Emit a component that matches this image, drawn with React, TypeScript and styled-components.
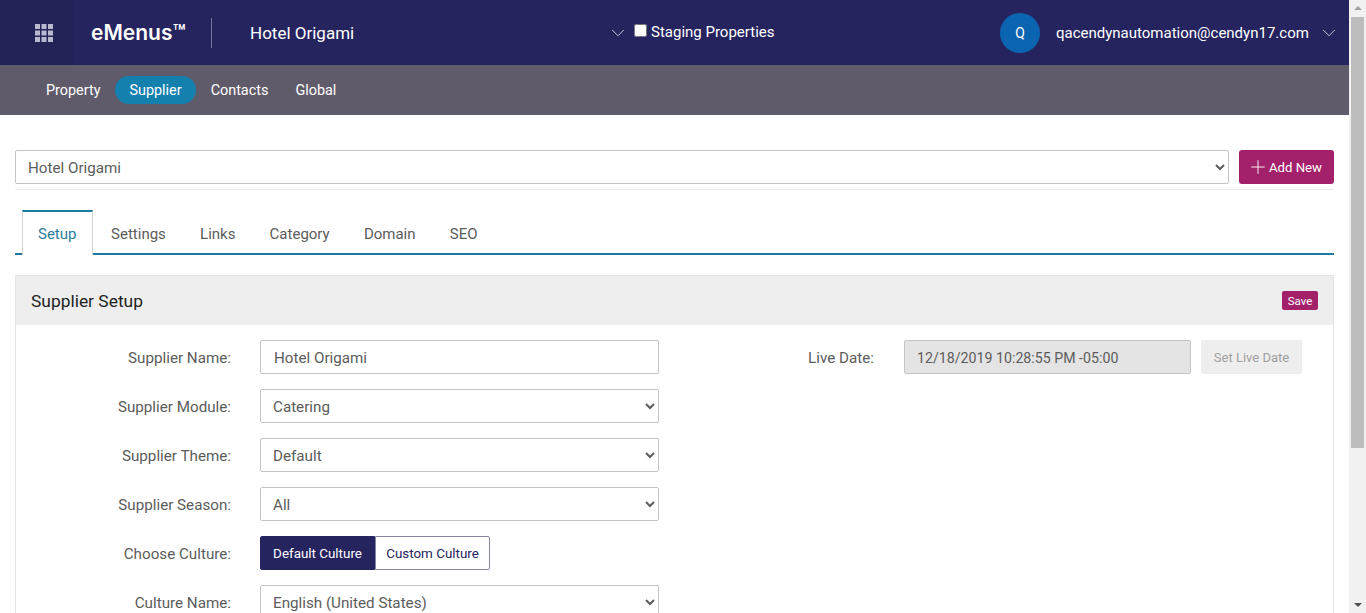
import styled, { createGlobalStyle } from 'styled-components';
import { ChevronDown, Plus } from 'lucide-react';

const GlobalStyle = createGlobalStyle`
  body {
    margin: 0;
    background: #fff;
    font-family: Roboto, "Noto Sans", sans-serif;
    color: #5c5c5c;
  }
`;

const Page = styled.div`
  height: 613px;
  padding-right: 17px;
  overflow: hidden;
`;

const ScrollTrack = styled.div`
  position: fixed;
  top: 0;
  right: 0;
  bottom: 0;
  display: flex;
  flex-direction: column;
  align-items: center;
  justify-content: space-between;
  width: 17px;
  background: #f1f1f1;
`;

const ScrollArrow = styled.div<{ $down?: boolean }>`
  width: 0;
  height: 0;
  margin: 6px 0;
  border-left: 4px solid transparent;
  border-right: 4px solid transparent;
  ${({ $down }) => ($down ? 'border-top: 4px solid #505050;' : 'border-bottom: 4px solid #a3a3a3;')}
`;

const ScrollThumb = styled.div`
  position: absolute;
  top: 17px;
  left: 2px;
  width: 13px;
  height: 431px;
  background: #bdbdbd;
`;

const TopBar = styled.header`
  display: flex;
  align-items: center;
  height: 65px;
  background: #25245f;
  color: #fff;
`;

const AppsButton = styled.div`
  display: flex;
  align-items: center;
  justify-content: center;
  box-sizing: border-box;
  width: 73px;
  height: 65px;
  margin-right: 18px;
  padding-left: 15px;
  background: #232358;
`;

const Brand = styled.div`
  width: 120px;
  height: 30px;
  line-height: 30px;
  font-family: Inter, sans-serif;
  font-size: 21px;
  font-weight: 600;
  border-right: 1px solid #77769b;
`;

const HotelName = styled.div`
  width: 357px;
  margin-left: 38px;
  font-size: 17px;
`;

const StagingLabel = styled.label`
  display: flex;
  align-items: center;
  width: 371px;
  margin-top: -2px;
  font-size: 15px;
`;

const StagingBox = styled.input`
  width: 13px;
  height: 13px;
  margin: 0 4px 2px 5px;
`;

const Avatar = styled.div`
  display: flex;
  align-items: center;
  justify-content: center;
  width: 40px;
  height: 40px;
  margin-right: 16px;
  border-radius: 50%;
  background: #0b64b0;
  font-size: 14px;
`;

const UserEmail = styled.div`
  margin-right: 9px;
  font-size: 15px;
`;

const SubBar = styled.nav`
  display: flex;
  align-items: center;
  gap: 3px;
  height: 50px;
  padding-left: 34px;
  background: #5f5b6b;
`;

const SubLink = styled.div<{ $active?: boolean }>`
  height: 28px;
  padding: 0 ${({ $active }) => ($active ? '14px' : '12px')};
  line-height: 29px;
  border-radius: 14px;
  font-size: 14.4px;
  color: #fff;
  background: ${({ $active }) => ($active ? '#1380ad' : 'transparent')};
`;

const Content = styled.main`
  padding: 35px 15px 0;
`;

const SelectRow = styled.div`
  display: flex;
  gap: 10px;
  padding-bottom: 5px;
  border-bottom: 1px solid #eee;
`;

const Select = styled.select`
  box-sizing: border-box;
  height: 34px;
  padding: 1px 8px 0;
  font: inherit;
  font-size: 15.2px;
  color: #5c5c5c;
  background: #fff;
  border: 1px solid #c4c4c4;
  border-radius: 2px;
`;

const SupplierSelect = styled(Select)`
  flex: 1;
`;

const AddNew = styled.button`
  display: flex;
  align-items: center;
  justify-content: center;
  width: 95px;
  height: 34px;
  padding: 0;
  font: inherit;
  font-size: 13.2px;
  color: #fff;
  background: #a3206b;
  border: 0;
  border-radius: 3px;
`;

const AddIcon = styled(Plus)`
  margin: 0 0 0 -4px;
`;

const Tabs = styled.div`
  display: flex;
  box-sizing: border-box;
  height: 45px;
  margin-top: 20px;
  padding-left: 7px;
  border-bottom: 2px solid #1d7b9f;
`;

const Tab = styled.div<{ $active?: boolean }>`
  box-sizing: border-box;
  height: ${({ $active }) => ($active ? '45px' : '43px')};
  padding: 0 ${({ $active }) => ($active ? '15px 0 15px' : '17.1px')};
  line-height: ${({ $active }) => ($active ? '44px' : '48px')};
  font-size: 15px;
  color: ${({ $active }) => ($active ? '#2a7ea0' : '#5c5c5c')};
  ${({ $active }) =>
    $active &&
    `
    width: 71px;
    margin-right: 1px;
    background: #fff;
    border: 1px solid #d4d4d4;
    border-top: 2px solid #1d7b9f;
    border-bottom: 0;
  `}
`;

const Panel = styled.section`
  margin-top: 20px;
  border: 1px solid #e4e4e4;
  border-bottom: 0;
`;

const PanelHead = styled.div`
  display: flex;
  align-items: center;
  justify-content: space-between;
  height: 49px;
  padding: 0 15px;
  background: #eee;
`;

const PanelTitle = styled.h2`
  margin: 0;
  font-size: 17.4px;
  font-weight: 400;
  color: #222;
`;

const SaveButton = styled.button`
  width: 36px;
  height: 19px;
  padding: 0;
  font: inherit;
  font-size: 11.5px;
  color: #fff;
  background: #a3206b;
  border: 0;
  border-radius: 2px;
`;

const PanelBody = styled.div`
  display: flex;
  padding-top: 15px;
`;

const FormColumn = styled.div`
  display: flex;
  flex-direction: column;
  gap: 15px;
  width: 643px;
`;

const Row = styled.div`
  display: flex;
  align-items: center;
`;

const LiveRow = styled(Row)`
  align-self: flex-start;
`;

const Label = styled.div`
  width: 215px;
  padding-top: 1px;
  font-size: 15.2px;
  text-align: right;
`;

const FieldInput = styled.input`
  box-sizing: border-box;
  width: 399px;
  height: 34px;
  margin-left: 29px;
  padding: 1px 13px 0;
  font: inherit;
  font-size: 15.2px;
  color: #5c5c5c;
  border: 1px solid #c4c4c4;
  border-radius: 2px;
`;

const FieldSelect = styled(Select)`
  width: 399px;
  margin-left: 29px;
`;

const CultureToggle = styled.div`
  display: flex;
  margin-left: 29px;
`;

const CultureOption = styled.div<{ $active?: boolean }>`
  box-sizing: border-box;
  width: 115px;
  height: 34px;
  line-height: 33px;
  text-align: center;
  font-size: 13.4px;
  border: 1px solid ${({ $active }) => ($active ? '#25245f' : '#86859f')};
  color: ${({ $active }) => ($active ? '#fff' : '#25245f')};
  background: ${({ $active }) => ($active ? '#25245f' : '#fff')};
  border-radius: ${({ $active }) => ($active ? '2px 0 0 2px' : '0 2px 2px 0')};
`;

const DateInput = styled(FieldInput)`
  width: 287px;
  margin-left: 30px;
  padding-left: 12px;
  font-size: 14.2px;
  background: #e4e4e4;
`;

const LiveButton = styled.button`
  width: 101px;
  height: 34px;
  margin-left: 10px;
  padding: 0;
  font: inherit;
  font-size: 13px;
  color: #a0a0a0;
  background: #eee;
  border: 0;
  border-radius: 2px;
`;

export default function App() {
  return (
    <Page>
      <GlobalStyle />
      <TopBar>
        <AppsButton>
          <svg width="18" height="18" viewBox="0 0 18 18" fill="#b9b9cf">
            {[0, 6.5, 13].flatMap((y) =>
              [0, 6.5, 13].map((x) => <rect key={`${x}-${y}`} x={x} y={y} width="5" height="5" />)
            )}
          </svg>
        </AppsButton>
        <Brand>eMenus™</Brand>
        <HotelName>Hotel Origami</HotelName>
        <ChevronDown size={22} strokeWidth={1} color="#d5d5e2" />
        <StagingLabel>
          <StagingBox type="checkbox" />
          Staging Properties
        </StagingLabel>
        <Avatar>Q</Avatar>
        <UserEmail>qacendynautomation@cendyn17.com</UserEmail>
        <ChevronDown size={22} strokeWidth={1} color="#d5d5e2" />
      </TopBar>
      <SubBar>
        <SubLink>Property</SubLink>
        <SubLink $active>Supplier</SubLink>
        <SubLink>Contacts</SubLink>
        <SubLink>Global</SubLink>
      </SubBar>
      <Content>
        <SelectRow>
          <SupplierSelect defaultValue="Hotel Origami">
            <option>Hotel Origami</option>
          </SupplierSelect>
          <AddNew>
            <AddIcon size={22} strokeWidth={1} />
            Add New
          </AddNew>
        </SelectRow>
        <Tabs>
          <Tab $active>Setup</Tab>
          <Tab>Settings</Tab>
          <Tab>Links</Tab>
          <Tab>Category</Tab>
          <Tab>Domain</Tab>
          <Tab>SEO</Tab>
        </Tabs>
        <Panel>
          <PanelHead>
            <PanelTitle>Supplier Setup</PanelTitle>
            <SaveButton>Save</SaveButton>
          </PanelHead>
          <PanelBody>
            <FormColumn>
              <Row>
                <Label>Supplier Name:</Label>
                <FieldInput defaultValue="Hotel Origami" />
              </Row>
              <Row>
                <Label>Supplier Module:</Label>
                <FieldSelect defaultValue="Catering">
                  <option>Catering</option>
                </FieldSelect>
              </Row>
              <Row>
                <Label>Supplier Theme:</Label>
                <FieldSelect defaultValue="Default">
                  <option>Default</option>
                </FieldSelect>
              </Row>
              <Row>
                <Label>Supplier Season:</Label>
                <FieldSelect defaultValue="All">
                  <option>All</option>
                </FieldSelect>
              </Row>
              <Row>
                <Label>Choose Culture:</Label>
                <CultureToggle>
                  <CultureOption $active>Default Culture</CultureOption>
                  <CultureOption>Custom Culture</CultureOption>
                </CultureToggle>
              </Row>
              <Row>
                <Label>Culture Name:</Label>
                <FieldSelect defaultValue="English (United States)">
                  <option>English (United States)</option>
                </FieldSelect>
              </Row>
            </FormColumn>
            <LiveRow>
              <Label>Live Date:</Label>
              <DateInput disabled defaultValue="12/18/2019 10:28:55 PM -05:00" />
              <LiveButton disabled>Set Live Date</LiveButton>
            </LiveRow>
          </PanelBody>
        </Panel>
      </Content>
      <ScrollTrack>
        <ScrollArrow />
        <ScrollThumb />
        <ScrollArrow $down />
      </ScrollTrack>
    </Page>
  );
}
